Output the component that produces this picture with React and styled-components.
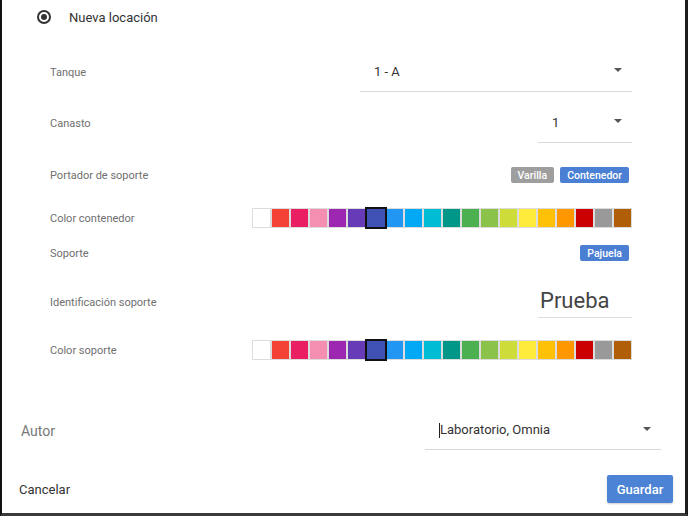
import styled, { createGlobalStyle } from 'styled-components';

const GlobalStyle = createGlobalStyle`
  html, body {
    margin: 0;
    padding: 0;
    background: #fff;
  }
  body {
    font-family: Roboto, 'Liberation Sans', Arial, sans-serif;
  }
`;

const palette = [
  '#ffffff', '#f44336', '#e91e63', '#f48fb1', '#9c27b0', '#673ab7', '#3f51b5',
  '#2196f3', '#03a9f4', '#00bcd4', '#009688', '#4caf50', '#8bc34a', '#cddc39',
  '#ffeb3b', '#ffc107', '#ff9800', '#cc0000', '#999999', '#b05f08',
];

const Frame = styled.div`
  box-sizing: border-box;
  width: 688px;
  height: 516px;
  border-left: 2px solid #111;
  border-right: 3px solid #1c1c1c;
  border-bottom: 3px solid #3a3a3a;
  background: #fff;
  display: flex;
  flex-direction: column;
`;

const Header = styled.div`
  height: 34px;
  display: flex;
  align-items: center;
  padding-left: 35px;
  gap: 18px;
  font-size: 13px;
  color: #333;
`;

const Radio = styled.span`
  box-sizing: border-box;
  width: 14px;
  height: 14px;
  border-radius: 50%;
  border: 2px solid #333;
  display: flex;
  align-items: center;
  justify-content: center;

  &::after {
    content: '';
    width: 6px;
    height: 6px;
    border-radius: 50%;
    background: #333;
  }
`;

const Form = styled.div`
  padding: 18px 53px 0 48px;
  display: flex;
  flex-direction: column;
`;

const Row = styled.div`
  height: ${(p) => p.$h}px;
  display: flex;
  align-items: center;
  justify-content: space-between;
`;

const Label = styled.span`
  font-size: 11px;
  color: #6f6f6f;
`;

const Select = styled.div`
  box-sizing: border-box;
  width: ${(p) => p.$w}px;
  height: ${(p) => p.$h || 39}px;
  border-bottom: 1px solid #d9d9d9;
  display: flex;
  align-items: center;
  justify-content: space-between;
  padding: 0 10px 1px 14px;
  font-size: ${(p) => p.$size || 13}px;
  color: #333;
`;

const Arrow = styled.span`
  width: 0;
  height: 0;
  border-left: 4px solid transparent;
  border-right: 4px solid transparent;
  border-top: 4px solid #555;
  margin-bottom: 2px;
`;

const Chips = styled.div`
  display: flex;
  gap: 6px;
  margin-right: 3px;
`;

const Chip = styled.span`
  height: 16px;
  padding: 0 7px;
  border-radius: 2px;
  background: ${(p) => (p.$active ? '#4a7fd4' : '#9e9e9e')};
  color: #fff;
  font-size: 10.5px;
  font-weight: 500;
  display: flex;
  align-items: center;
`;

const Swatches = styled.div`
  display: flex;
  align-items: center;
`;

const Swatch = styled.span`
  box-sizing: border-box;
  width: ${(p) => (p.$selected ? 22 : 19)}px;
  height: ${(p) => (p.$selected ? 22 : 20)}px;
  margin: 0 ${(p) => (p.$selected ? -1.5 : 0)}px;
  border: ${(p) => (p.$selected ? '2px solid #111' : '1px solid #dcdcdc')};
  background: ${(p) => p.$color};
  position: relative;
  z-index: ${(p) => (p.$selected ? 1 : 0)};
`;

const TextInput = styled.div`
  box-sizing: border-box;
  width: 94px;
  height: 31px;
  border-bottom: 1.5px solid #ddd;
  font-size: 22px;
  color: #444;
  padding-left: 2px;
  display: flex;
  align-items: center;
  padding-bottom: 2px;
`;

const Bottom = styled.div`
  flex: 1;
  display: flex;
  flex-direction: column;
  padding: 49px 24px 0 19px;
`;

const AuthorLabel = styled.span`
  font-size: 14px;
  color: #777;
`;

const Caret = styled.span`
  display: inline-block;
  width: 1px;
  height: 15px;
  background: #222;
  vertical-align: middle;
`;

const Footer = styled.div`
  margin: 21px -12px 0 -2px;
  height: 34px;
  display: flex;
  align-items: center;
  justify-content: space-between;
`;

const TextButton = styled.span`
  font-size: 13px;
  color: #333;
`;

const PrimaryButton = styled.span`
  width: 66px;
  height: 28px;
  border-radius: 2px;
  background: #4d83d4;
  color: #fff;
  font-size: 13px;
  font-weight: 500;
  display: flex;
  align-items: center;
  justify-content: center;
  box-shadow: 0 1px 2px rgba(0, 0, 0, 0.2);
`;

const ColorPicker = ({ selected }) => (
  <Swatches>
    {palette.map((c, i) => (
      <Swatch key={c} $color={c} $selected={i === selected} />
    ))}
  </Swatches>
);

export default function App() {
  return (
    <>
      <GlobalStyle />
      <Frame>
        <Header>
          <Radio />
          <span>Nueva locación</span>
        </Header>
        <Form>
          <Row $h={40}>
            <Label>Tanque</Label>
            <Select $w={272} $h={40}>
              <span>1 - A</span>
              <Arrow />
            </Select>
          </Row>
          <Row $h={62}>
            <Label>Canasto</Label>
            <Select $w={94}>
              <span>1</span>
              <Arrow />
            </Select>
          </Row>
          <Row $h={42}>
            <Label>Portador de soporte</Label>
            <Chips>
              <Chip>Varilla</Chip>
              <Chip $active>Contenedor</Chip>
            </Chips>
          </Row>
          <Row $h={44}>
            <Label>Color contenedor</Label>
            <ColorPicker selected={6} />
          </Row>
          <Row $h={26}>
            <Label>Soporte</Label>
            <Chips>
              <Chip $active>Pajuela</Chip>
            </Chips>
          </Row>
          <Row $h={72}>
            <Label>Identificación soporte</Label>
            <TextInput>Prueba</TextInput>
          </Row>
          <Row $h={24}>
            <Label>Color soporte</Label>
            <ColorPicker selected={6} />
          </Row>
        </Form>
        <Bottom>
          <Row $h={40}>
            <AuthorLabel>Autor</AuthorLabel>
            <Select $w={236} $h={38}>
              <span>
                <Caret />
                Laboratorio, Omnia
              </span>
              <Arrow />
            </Select>
          </Row>
          <Footer>
            <TextButton>Cancelar</TextButton>
            <PrimaryButton>Guardar</PrimaryButton>
          </Footer>
        </Bottom>
      </Frame>
    </>
  );
}
